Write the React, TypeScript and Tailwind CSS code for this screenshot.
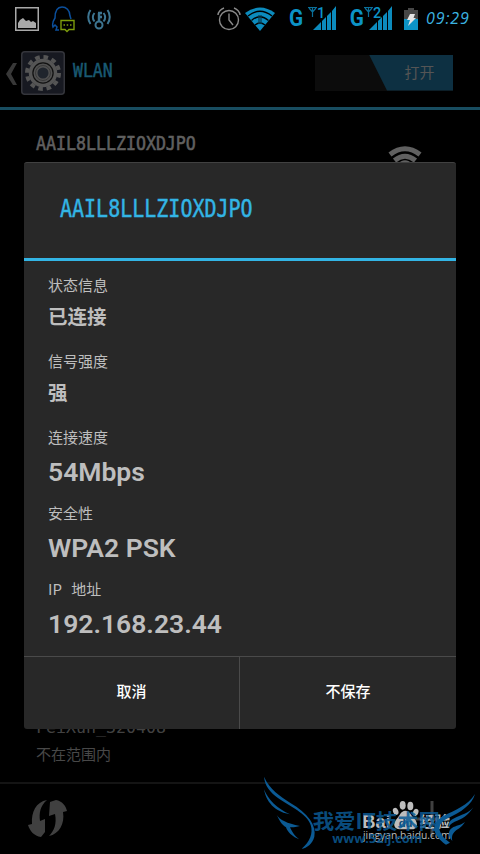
import clsx from 'clsx'

const SSID = 'AAIL8LLLZIOXDJPO'

const details = [
  { label: '状态信息', value: '已连接', cjk: true },
  { label: '信号强度', value: '强', cjk: true },
  { label: '连接速度', value: '54Mbps' },
  { label: '安全性', value: 'WPA2 PSK' },
  { label: 'IP 地址', value: '192.168.23.44' },
]

function SignalIcon({ slot }: { slot: string }) {
  return (
    <svg width="28" height="24" viewBox="0 0 28 24" className="shrink-0">
      <path d="M0 1.5h9M4.500 1v10M1 2l3.500 4 3.500-4" fill="none" stroke="#0a6f99" strokeWidth="1.200" />
      <text x="9" y="11.500" fontSize="14.500" fontWeight="500" fontFamily="Roboto, sans-serif" fill="#0c93c6">{slot}</text>
      <path d="M5 24l8-8v8zM14 15l4-4v13h-4zM19 10l4-4v18h-4zM24 5l4-5v24h-4z" fill="#0c8bbd" />
    </svg>
  )
}

function StatusBar() {
  return (
    <div className="h-9 flex items-center pl-[15px] pr-[9px]">
      <svg width="24" height="24" viewBox="0 0 24 24" className="mt-0.5">
        <rect x=".75" y=".75" width="22.500" height="22.500" fill="none" stroke="#a9a9a9" strokeWidth="1.500" />
        <path d="M3 21v-5l2-3 3-2 3 3 3-1 2 2 2-1 3 2v5z" fill="#a9a9a9" />
      </svg>
      <svg width="25" height="28" viewBox="0 0 25 28" className="ml-3 mt-0.5">
        <path d="M8 25H5l1-3-2-2-2 2c-1-3 0-6 2-9C4 5 7 2 11 2s8 3 8 9l1 3" fill="none" stroke="#0b4f9c" strokeWidth="1.500" />
        <path d="M10 15.500h13v9h-5l-2 2-2-2h-4z" fill="none" stroke="#7d9c0c" strokeWidth="1.400" />
        <path d="M12.500 20H14M15.700 20h1.500M19 20h1.500" stroke="#7d9c0c" strokeWidth="1.500" />
      </svg>
      <svg width="24" height="24" viewBox="0 0 24 24" className="ml-[11px] mt-0.5" fill="none" stroke="#3d7591" strokeWidth="2">
        <circle cx="12" cy="18" r="3.500" />
        <path d="M12 14.500V6M11 6h4M12 10h3" strokeWidth="2.400" />
        <path d="M7.500 6c-2 2.500-2 6 0 8.500M3.500 3c-3 4-3 10 0 14M16.500 6c2 2.500 2 6 0 8.500M20.500 3c3 4 3 10 0 14" />
      </svg>
      <div className="flex-1" />
      <svg width="24" height="24" viewBox="0 0 24 24" className="mt-0.5" fill="none" stroke="#8a8a8a" strokeWidth="1.400">
        <circle cx="12" cy="13" r="9.500" />
        <path d="M12 6.500V13l4 5M1 8c0-3 3-6 6-7M23 8c0-3-3-6-6-7" />
      </svg>
      <svg width="30" height="24" viewBox="0 0 30 24" className="ml-1 mt-0.5">
        <path d="M0 6Q15-5 30 6L15 24z" fill="#0c8bbd" />
        <path d="M3 9Q15-.5 27 9M6.500 13.500Q15 6 23.500 13.500M10 18Q15 14 20 18" stroke="#000" strokeWidth="1.300" fill="none" />
        <path d="M13 8h4v9h-4z" fill="#06384c" fillOpacity=".6" />
      </svg>
      <span className="ml-[13px] w-5 pt-0.5 font-['Roboto',sans-serif] text-[23px] font-bold text-[#0c93c6] scale-x-90">G</span>
      <SignalIcon slot="1" />
      <span className="ml-[13px] w-[15px] pt-0.5 font-['Roboto',sans-serif] text-[23px] font-bold text-[#0c93c6] scale-x-90">G</span>
      <SignalIcon slot="2" />
      <svg width="14" height="22" viewBox="0 0 14 22" className="ml-3 mt-0.5">
        <path d="M4 0h6v2h4v9H0V2h4z" fill="#474747" />
        <path d="M0 11h14v11H0z" fill="#0c93c6" />
        <path d="M6 6h5L9.500 10H12L4 18l2-6H3z" fill="#e5e5e5" />
      </svg>
      <span className="ml-2 w-[45px] whitespace-nowrap font-['Open_Sans',sans-serif] text-base leading-5 italic tracking-[0.9px] text-[#3bb3e0]">09:29</span>
    </div>
  )
}

function GearIcon() {
  return (
    <svg width="44" height="44" viewBox="0 0 44 44">
      <rect x=".75" y=".75" width="42.500" height="42.500" rx="3" fill="#171921" stroke="#34353b" strokeWidth="1.500" />
      <circle cx="22" cy="22" r="16" fill="none" stroke="#555" strokeWidth="4" strokeDasharray="4.600 3.778" />
      <circle cx="22" cy="22" r="12.500" fill="#111" stroke="#555" strokeWidth="3.500" />
      <circle cx="22" cy="22" r="7.500" fill="#20252d" stroke="#505050" strokeWidth="4" />
      <circle cx="22" cy="22" r="7.500" fill="none" stroke="#333" strokeWidth=".8" />
    </svg>
  )
}

function ActionBar() {
  return (
    <div className="h-[74px] flex items-center pl-1.5 pr-[27px] border-b-[3px] border-[#184d60]">
      <svg width="11" height="22" viewBox="0 0 11 22" className="mt-1">
        <path d="M7 0h4L5 11l6 11H7L0 11z" fill="#383838" />
      </svg>
      <div className="ml-1 mt-0.5"><GearIcon /></div>
      <span className="ml-2 scale-y-[1.200] font-['DejaVu_Sans_Mono',monospace] text-[16.500px] text-[#1a5a72] [-webkit-text-stroke:0.4px]">WLAN</span>
      <div className="ml-auto mt-0.5 w-[138px] h-9 bg-[#0c0c0c] flex justify-end">
        <div className="w-[84px] bg-[#0d3042] pl-[17px] flex items-center justify-center text-[15px] text-[#555] [clip-path:polygon(0_0,100%_0,100%_100%,18px_100%)]">
          打开
        </div>
      </div>
    </div>
  )
}

function DetailDialog() {
  return (
    <div className="absolute left-6 top-[162px] w-[432px] h-[567px] flex flex-col rounded-[3px] bg-[#282828] border-t border-[#414141]">
      <div className="h-[98px] shrink-0 pl-9 flex items-center border-b-[3px] border-[#33b5e5]">
        <span className="scale-y-[1.200] -mt-1 font-['DejaVu_Sans_Mono',monospace] text-[20px] leading-6 text-[#33b5e5] [-webkit-text-stroke:0.4px]">{SSID}</span>
      </div>
      <div className="flex-1 px-6 pt-3.5 text-[#bebebe]">
        {details.map(d => (
          <div key={d.label} className="h-[76px]">
            <div className="text-[15px] leading-5 [word-spacing:6px]">{d.label}</div>
            <div
              className={clsx(
                'whitespace-nowrap',
                d.cjk
                  ? 'pt-2 text-[19.500px] leading-[26px] font-bold'
                  : "pt-[9px] font-['Roboto',sans-serif] text-[26.500px] leading-8 font-semibold",
              )}
            >
              {d.value}
            </div>
          </div>
        ))}
      </div>
      <div className="h-[73px] shrink-0 flex border-t border-[#4a4a4a] text-[15px] font-medium text-white">
        <button className="w-[216px] pb-1 border-r border-[#4a4a4a]">取消</button>
        <button className="flex-1 pb-1">不保存</button>
      </div>
    </div>
  )
}

function Watermark() {
  return (
    <div className="absolute left-[250px] top-[770px] w-[230px] h-[84px]">
      <svg width="230" height="84" viewBox="0 0 690 252">
        <g fill="#bdbdbd">
          <ellipse cx="437" cy="124" rx="8" ry="11" transform="rotate(-20 437 124)" />
          <ellipse cx="458" cy="106" rx="9" ry="13" />
          <ellipse cx="481" cy="108" rx="9" ry="13" />
          <ellipse cx="497" cy="127" rx="8" ry="11" transform="rotate(20 497 127)" />
          <path d="M466 122c14 0 17 15 27 24 14 14 8 32-8 32h-36c-17 0-22-18-9-31 9-9 12-25 26-25z" />
          <text x="337" y="173" fontSize="56" fontWeight="700" fontFamily="Liberation Sans, sans-serif" textLength="86" lengthAdjust="spacingAndGlyphs">Bai</text>
          <text x="509" y="170" fontSize="45" fontWeight="700" fontFamily="Noto Sans CJK SC, sans-serif" textLength="90">经验</text>
          <text x="339" y="207" fontSize="32" fontFamily="Open Sans, sans-serif" fontWeight="500" textLength="263" lengthAdjust="spacingAndGlyphs">jingyan.baidu.com</text>
        </g>
        <text x="446" y="172" fontSize="34" fontWeight="700" fontFamily="Liberation Sans, sans-serif" fill="#0b4a75">du</text>
        <g fill="#0b5a94">
          <path d="M42 20C60 60 90 78 120 98c55 32 80 68 73 102-5 20-23 35-38 36 25-21 35-46 27-71-12-35-62-55-97-80-25-20-40-35-43-65z" />
          <path d="M42 58c13 32 38 57 78 75-35-5-70-28-78-75zM80 135c10 15 30 25 70 33-15 4-25 4-30 4 8 18 20 33 32 38-27-10-40-25-44-38-13-7-20-22-28-37z" />
          <path d="M675 72c-9 34-45 55-80 72-35 16-37 44 5 74l-12 6c-40-28-50-62-8-86 35-18 74-31 95-66z" />
          <path d="M670 112c-18 26-30 34-56 43-12 5-17 13-18 19-3-13 2-22 14-28 24-12 46-16 60-34zM645 156c-10 16-19 19-29 27-8 7-12 16-9 30-15-16-12-32-1-39 12-8 26-8 39-18z" />
        </g>
        <g fill="#0b5a94" fillOpacity=".85">
          <text x="188" y="178" fontSize="62" fontWeight="700" fontFamily="Noto Sans CJK SC, sans-serif" textLength="382" lengthAdjust="spacingAndGlyphs">我爱IT技术网</text>
          <text x="247" y="219" fontSize="38" fontWeight="700" fontFamily="Open Sans, sans-serif" textLength="270" lengthAdjust="spacingAndGlyphs">www.52ij.com</text>
        </g>
      </svg>
    </div>
  )
}

export default function App() {
  return (
    <div className="relative w-[480px] h-[854px] overflow-hidden bg-black flex flex-col font-['Noto_Sans_CJK_SC',sans-serif]">
      <StatusBar />
      <ActionBar />
      <div className="flex-1 flex flex-col pl-9 pr-[58px]">
        <div className="mt-[22px] flex justify-between">
          <span className="scale-y-[1.200] h-6 font-['DejaVu_Sans_Mono',monospace] text-[16.600px] leading-6 text-[#606060] [-webkit-text-stroke:0.5px]">{SSID}</span>
          <svg width="34" height="30" viewBox="0 0 34 30" className="mt-3.5" fill="none" stroke="#606060" strokeWidth="5">
            <path d="M2 8.500Q17-3 32 8.500M6.500 14.500Q17 6 27.500 14.500M11 20Q17 14 23 20" />
          </svg>
        </div>
        <div className="mt-auto font-['DejaVu_Sans_Mono',monospace] text-[16.600px] leading-6 text-[#424242]">FeiXun_320408</div>
        <div className="mt-0.5 mb-4 text-[15px] leading-6 text-[#484848]">不在范围内</div>
      </div>
      <div className="h-[72px] shrink-0 border-t-2 border-[#141414] pl-7 pr-[29px] flex items-center justify-between">
        <svg width="40" height="40" viewBox="0 0 40 40" fill="#404040">
          <path d="M19 1C8 3 3 13 4 25L0 26c2 6 6 11 13 12l4-5V20l-5 2C11 14 12 7 19 1zM22 3l6-2c6 1 10 6 11 11l-4 1c2 12-4 22-14 24 5-5 8-12 6-22l-6 2z" />
        </svg>
        <svg width="38" height="38" viewBox="0 0 38 38">
          <path d="M17.500 1h3v16.500H37v3H20.500V37h-3V20.500H1v-3h16.500z" fill="#404040" />
        </svg>
      </div>
      <DetailDialog />
      <Watermark />
    </div>
  )
}
